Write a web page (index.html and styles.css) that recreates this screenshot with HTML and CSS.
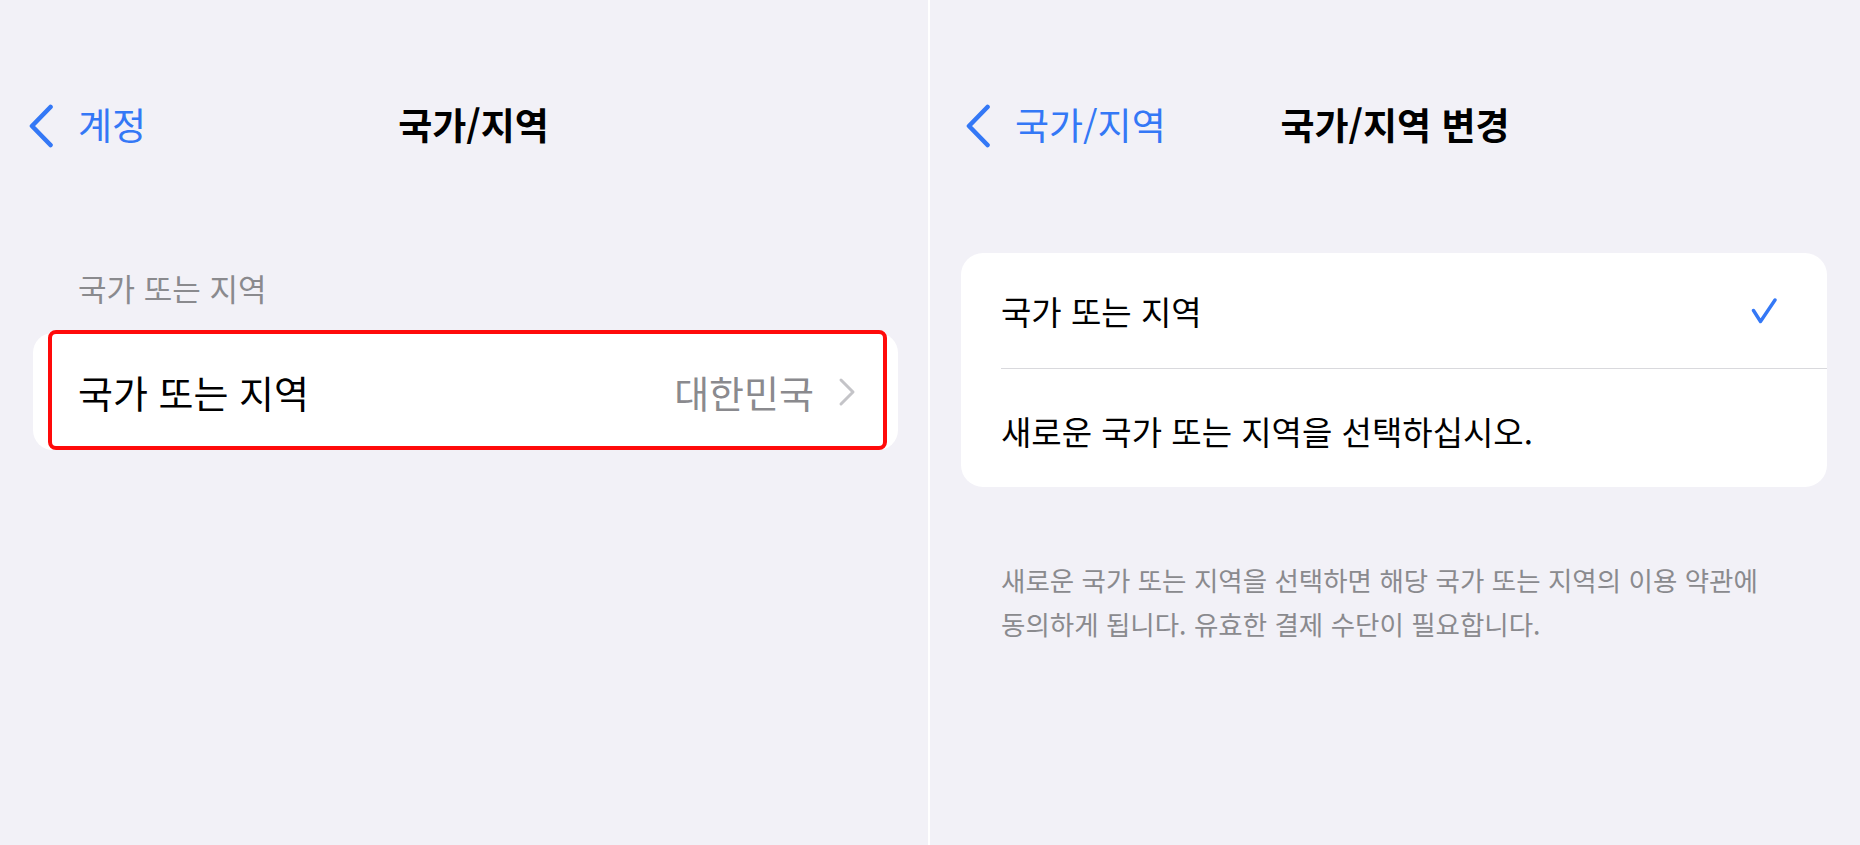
FILE: index.html
```html
<!DOCTYPE html>
<html lang="ko">
<head>
<meta charset="utf-8">
<title>국가/지역</title>
<link rel="stylesheet" href="styles.css">
</head>
<body>
<div class="screen">
  <section class="panel panel-left">
    <header class="nav nav-left">
      <div class="back">
        <svg class="back-chevron" viewBox="0 0 26 44" width="26" height="44"><path d="M22.5 3 L4 22 L22.5 41" fill="none" stroke="#3478f6" stroke-width="4.6" stroke-linecap="round" stroke-linejoin="round"/></svg>
        <span class="back-label">계정</span>
      </div>
      <h1 class="title">국가/지역</h1>
      <div class="spacer"></div>
    </header>
    <div class="section-header">국가 또는 지역</div>
    <div class="card card-left">
      <div class="row-left">
        <span class="row-label">국가 또는 지역</span>
        <span class="row-value">대한민국</span>
        <svg class="disclosure" viewBox="0 0 18 30" width="18" height="30"><path d="M3 3 L15 15 L3 27" fill="none" stroke="#c4c4c8" stroke-width="3" stroke-linecap="round" stroke-linejoin="round"/></svg>
      </div>
      <div class="highlight"></div>
    </div>
  </section>
  <section class="panel panel-right">
    <header class="nav nav-right">
      <div class="back">
        <svg class="back-chevron" viewBox="0 0 26 44" width="26" height="44"><path d="M22.5 3 L4 22 L22.5 41" fill="none" stroke="#3478f6" stroke-width="4.6" stroke-linecap="round" stroke-linejoin="round"/></svg>
        <span class="back-label">국가/지역</span>
      </div>
      <h1 class="title">국가/지역 변경</h1>
      <div class="spacer"></div>
    </header>
    <div class="card card-right">
      <div class="row-right row-first">
        <span class="row-label-sm">국가 또는 지역</span>
        <svg class="check" viewBox="0 0 26 26" width="26" height="26"><path d="M2.5 12.5 L9.5 23.5 L24 2" fill="none" stroke="#3478f6" stroke-width="3.4" stroke-linecap="round" stroke-linejoin="round"/></svg>
      </div>
      <div class="row-right row-second">
        <span class="row-label-sm">새로운 국가 또는 지역을 선택하십시오.</span>
      </div>
    </div>
    <p class="footer-note">새로운 국가 또는 지역을 선택하면 해당 국가 또는 지역의 이용 약관에 동의하게 됩니다. 유효한 결제 수단이 필요합니다.</p>
  </section>
</div>
</body>
</html>
```

FILE: styles.css
```css
html, body {
  margin: 0;
  padding: 0;
  background: #f2f1f7;
}

body {
  font-family: "Noto Sans CJK KR", "Noto Sans", sans-serif;
  color: #000;
  word-break: keep-all;
}

.screen {
  display: flex;
  width: 1860px;
  height: 845px;
  overflow: hidden;
}

.panel {
  display: flex;
  flex-direction: column;
  background: #f2f1f7;
}

.panel-left {
  width: 928px;
  border-right: 2px solid #ffffff;
}

.panel-right {
  flex: 1;
}

.nav {
  display: grid;
  grid-template-columns: 1fr auto 1fr;
  align-items: center;
  height: 50px;
  margin-top: 99px;
}

.nav-left {
  padding: 0 9px 0 28px;
}

.nav-right {
  padding: 0 35px;
}

.back {
  display: flex;
  align-items: center;
  gap: 24px;
}

.back-chevron {
  display: block;
  flex: none;
  position: relative;
  top: 2px;
}

.back-label {
  font-size: 37px;
  line-height: 46px;
  color: #3478f6;
  white-space: nowrap;
}

.title {
  margin: 0;
  font-size: 37px;
  line-height: 46px;
  font-weight: 700;
  white-space: nowrap;
}

.section-header {
  margin-top: 120px;
  padding-left: 78px;
  font-size: 31px;
  line-height: 38px;
  color: #8a8a8e;
}

.card {
  background: #ffffff;
}

.card-left {
  position: relative;
  margin-top: 26px;
  margin-left: 33px;
  width: 865px;
  height: 117px;
  border-radius: 20px;
}

.row-left {
  display: flex;
  align-items: center;
  height: 100%;
  padding: 0 42px 0 45px;
}

.row-label {
  flex: 1;
  font-size: 38px;
  line-height: 46px;
}

.row-value {
  font-size: 38px;
  line-height: 46px;
  color: #8a8a8e;
  margin-right: 24px;
}

.disclosure {
  display: block;
  flex: none;
}

.highlight {
  position: absolute;
  left: 15px;
  top: -3px;
  width: 831px;
  height: 112px;
  border: 4px solid #ff0a0a;
  border-radius: 8px;
}

.card-right {
  margin-top: 104px;
  margin-left: 31px;
  width: 866px;
  border-radius: 22px;
  overflow: hidden;
}

.row-right {
  display: flex;
  align-items: center;
  margin-left: 40px;
  padding-right: 50px;
}

.row-first {
  height: 115px;
  border-bottom: 1px solid #d9d9dd;
}

.row-second {
  height: 118px;
  padding-top: 6px;
  box-sizing: border-box;
}

.row-label-sm {
  flex: 1;
  font-size: 33px;
  line-height: 42px;
}

.check {
  display: block;
  flex: none;
}

.footer-note {
  margin: 71px 0 0;
  padding: 0 60px 0 71px;
  font-size: 26.5px;
  line-height: 44px;
  color: #8a8a8e;
}
```
